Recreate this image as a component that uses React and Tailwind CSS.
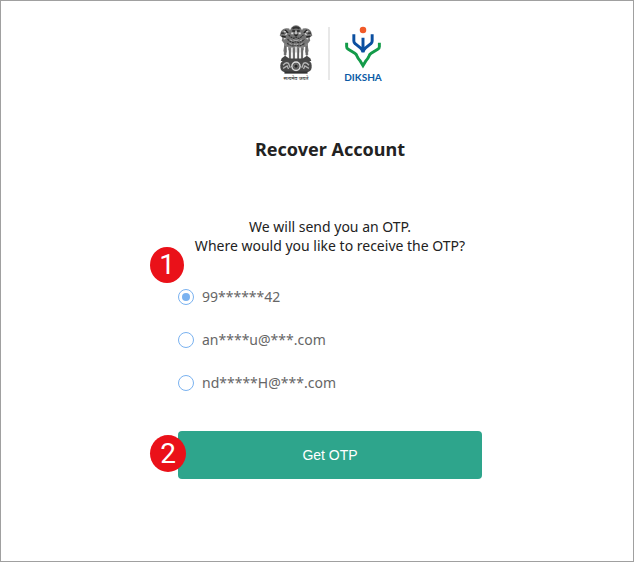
import React, { useState } from "react";

const destinations = [
  { id: "phone", label: "99******42" },
  { id: "email", label: "an****u@***.com" },
  { id: "recovery", label: "nd*****H@***.com" },
];

function Emblem() {
  return (
    <svg viewBox="30 30 100 139" preserveAspectRatio="none" className="h-[49px] w-[34px]" role="img" aria-label="State emblem">
      {/* side lions */}
      <path d="M36 48 Q44 36 60 40 L66 54 L62 78 L56 104 L48 112 L43 104 L46 84 L38 74 L40 66 L32 60Z" fill="#777" />
      <path d="M124 48 Q116 36 100 40 L94 54 L98 78 L104 104 L112 112 L117 104 L114 84 L122 74 L120 66 L128 60Z" fill="#777" />
      {/* centre lion */}
      <path d="M66 38 Q80 24 94 38 L102 54 L108 76 L104 100 L94 108 L66 108 L56 100 L52 76 L58 54Z" fill="#737373" />
      <path d="M68 38 Q80 29 92 38 L89 43 Q80 37 71 43Z" fill="#333" />
      <path d="M69 45h8v4h-8zM83 45h8v4h-8zM74 56h12l-3 6h-6z" fill="#222" />
      <path d="M78 48h4v8h-4zM66 51h6v5h-6zM88 51h6v5h-6z" fill="#ddd" />
      <path d="M36 53h10M114 53h10M38 62l12 2M122 62l-12 2M48 44l9 9M112 44l-9 9" stroke="#252525" strokeWidth="4" />
      <path d="M44 49h6M110 49h6M49 58l5-4M111 58l-5-4M44 70l5-2M116 70l-5-2" stroke="#eee" strokeWidth="3" />
      <path d="M58 58l8 7 7 3 7-4 7 4 7-3 8-7M55 70l8 7 9 3 8-3 8 3 9-3 8-7M54 82l9 5 9 3 8-3 8 3 9-3 9-5" fill="none" stroke="#303030" strokeWidth="3" strokeDasharray="6 2" />
      <path d="M62 72l7 3M91 75l7-3M72 72l8 3 8-3M61 82l6 3M93 85l6-3M74 84l6 3 6-3" stroke="#c8c8c8" strokeWidth="2" fill="none" />
      {/* legs */}
      <path d="M49 83l-1 32M62 89l1 40M73 91l1 38M87 91l-1 38M98 89l-1 40M111 83l1 32" stroke="#858585" strokeWidth="8" />
      <path d="M55 92l1 36M68 94v34M80 92v36M92 94v34M105 92l-1 36" stroke="#fff" strokeWidth="4" />
      <path d="M48 90v28M62 96v32M74 96v32M87 96v32M98 96v32M112 90v28" stroke="#444" strokeWidth="2" />
      {/* abacus and wheel */}
      <path d="M38 124l10-7 12 8h40l12-8 10 7 3 8H35z" fill="#444" />
      <rect x="34" y="130" width="92" height="34" rx="14" fill="#484848" />
      <path d="M42 144q8-10 16-5l5 12M118 144q-8-10-16-5l-5 12M42 153l12-7 4 9M118 153l-12-7-4 9" stroke="#b5b5b5" strokeWidth="4" fill="none" />
      <circle cx="80" cy="147" r="14" fill="#ddd" />
      <circle cx="80" cy="147" r="10" fill="#555" />
      <path d="M80 137v20M70 147h20M73 140l14 14M87 140l-14 14" stroke="#aaa" strokeWidth="1" />
      <circle cx="80" cy="147" r="4" fill="#222" />
      <path d="M46 165h68" stroke="#333" strokeWidth="6" />
    </svg>
  );
}

function DikshaMark() {
  return (
    <svg viewBox="4 0 110 132" className="h-[44px] w-9" fill="none" aria-hidden="true">
      <circle cx="59" cy="14" r="10" fill="#f15a29" />
      <path d="M59 38v44M31 27v21q0 5 4 8l16 13q6 5 8 13 2-8 8-13l16-13q4-3 4-8V27" stroke="#0b4fa0" strokeWidth="9" />
      <path d="M9 53v12q0 5 5 8l20 12q5 3 7 9 3 8 9 14l9 15 9-15q6-6 9-14 2-6 7-9l20-12q5-3 5-8V53" stroke="#139b49" strokeWidth="9" />
    </svg>
  );
}

function Step({ children, className }) {
  return (
    <span
      className={`absolute flex items-center justify-center rounded-[50%] bg-[#ea1119] font-[Roboto,sans-serif] text-[28px] leading-none text-white ${className}`}
    >
      {children}
    </span>
  );
}

export default function App() {
  const [selected, setSelected] = useState("phone");
  return (
    <main className="flex min-h-screen flex-col items-center border border-[#a0a0a0] bg-white pr-4 pl-[42px] pt-6 font-['Noto_Sans',sans-serif] text-sm text-[#222]">
      <header className="flex h-[58px] items-start gap-[15px]">
        <div className="flex w-[34px] flex-col items-center">
          <Emblem />
          <span className="text-[5px] leading-[8px] font-medium whitespace-nowrap text-[#333]">सत्यमेव जयते</span>
        </div>
        <div className="mt-0.5 h-[53px] w-0.5 bg-[#e8e8e8]" />
        <div className="flex w-9 flex-col items-center">
          <DikshaMark />
          <span className="font-[Lato,sans-serif] text-[10px] leading-[16px] font-bold text-[#0b5aa5]">DIKSHA</span>
        </div>
      </header>
      <h1 className="mt-[54px] text-lg leading-6 font-bold">Recover Account</h1>
      <form className="mt-14 w-full max-w-[304px]" onSubmit={(e) => e.preventDefault()}>
        <fieldset>
          <legend className="w-full text-center leading-[19px]">
            We will send you an OTP.
            <br />
            Where would you like to receive the OTP?
          </legend>
          <div className="relative flex flex-col gap-[23px] pt-8">
            <Step className="-top-2 -left-7 h-9 w-[34px]">1</Step>
            {destinations.map(({ id, label }) => (
              <label key={id} className="flex items-center gap-2 leading-5 text-[#666]">
                <input
                  type="radio"
                  name="destination"
                  value={id}
                  checked={selected === id}
                  onChange={() => setSelected(id)}
                  className="grid size-4 appearance-none place-items-center rounded-full border border-[#7ab2f0] before:size-2 before:rounded-full checked:before:bg-[#7ab2f0]"
                />
                {label}
              </label>
            ))}
          </div>
        </fieldset>
        <div className="relative mt-[38px]">
          <button type="submit" className="h-12 w-full rounded bg-[#2ea58c] font-['Liberation_Sans',sans-serif] text-sm text-white">
            Get OTP
          </button>
          <Step className="top-1 -left-7 h-[37px] w-9">2</Step>
        </div>
      </form>
    </main>
  );
}
